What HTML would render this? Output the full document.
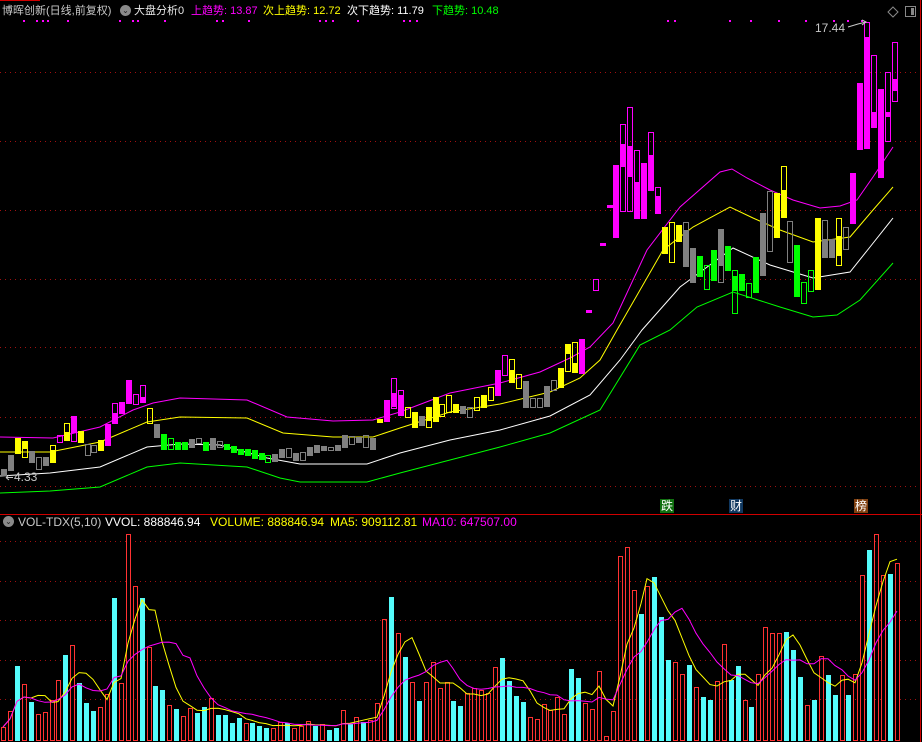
<!DOCTYPE html>
<html><head><meta charset="utf-8">
<style>
html,body{margin:0;padding:0;background:#000;}
body{width:922px;height:742px;overflow:hidden;position:relative;font-family:"Liberation Sans","Noto Sans CJK SC",sans-serif;font-size:12px;}
.t{position:absolute;white-space:nowrap;line-height:14px;}
.hd{font-size:11px;}
svg{position:absolute;left:0;top:0;}
</style></head><body>
<svg id="s" width="922" height="742" viewBox="0 0 922 742"></svg>
<div class="t hd" style="left:2px;top:4px;color:#c8c8c8">博晖创新(日线,前复权)</div>
<div class="t" style="left:120px;top:5px;width:11px;height:11px;border-radius:50%;background:#8a8a8a;color:#222;font-size:8px;text-align:center;line-height:11px">⌄</div>
<div class="t hd" style="left:134px;top:4px;color:#e8e8e8">大盘分析0</div>
<div class="t hd" style="left:191px;top:4px;color:#ff00ff">上趋势: 13.87</div>
<div class="t hd" style="left:263px;top:4px;color:#ffff00">次上趋势: 12.72</div>
<div class="t hd" style="left:347px;top:4px;color:#ffffff">次下趋势: 11.79</div>
<div class="t hd" style="left:432px;top:4px;color:#00ff00">下趋势: 10.48</div>
<div class="t" style="left:815px;top:21px;color:#c8c8c8">17.44</div>
<div class="t" style="left:14px;top:470px;color:#c8c8c8">4.33</div>
<div class="t" style="left:660px;top:499px;width:14px;height:14px;background:#107010;color:#fff;font-size:12px;text-align:center">跌</div>
<div class="t" style="left:729px;top:499px;width:14px;height:14px;background:#103860;color:#fff;font-size:12px;text-align:center">财</div>
<div class="t" style="left:854px;top:499px;width:14px;height:14px;background:#804010;color:#fff;font-size:12px;text-align:center">榜</div>
<div class="t" style="left:3px;top:516px;width:11px;height:11px;border-radius:50%;background:#8a8a8a;color:#222;font-size:8px;text-align:center;line-height:11px">⌄</div>
<div class="t" style="left:18px;top:515px;color:#c8c8c8">VOL-TDX(5,10)</div>
<div class="t" style="left:105px;top:515px;color:#ffffff">VVOL: 888846.94</div>
<div class="t" style="left:210px;top:515px;color:#ffff00">VOLUME: 888846.94</div>
<div class="t" style="left:330px;top:515px;color:#ffff00">MA5: 909112.81</div>
<div class="t" style="left:422px;top:515px;color:#ff00ff">MA10: 647507.00</div>
<script>
var s=document.getElementById('s'),h='';
function L(x1,y1,x2,y2,c,d){h+='<line x1="'+x1+'" y1="'+y1+'" x2="'+x2+'" y2="'+y2+'" stroke="'+c+'" stroke-width="1"'+(d?' stroke-dasharray="1,4"':'')+'/>';}
function R(x,y,w,hh,f,st){h+='<rect x="'+x+'" y="'+y+'" width="'+w+'" height="'+Math.max(hh,1)+'" fill="'+f+'"'+(st?' stroke="'+st+'" stroke-width="1"':'')+'/>';}
function P(pts,c){h+='<polyline points="'+pts+'" fill="none" stroke="'+c+'" stroke-width="1"/>';}
[72,141,210,279,347,417,486].forEach(function(y){L(0,y+.5,920,y+.5,'#a01010',1);});
[541,581,620,660,699].forEach(function(y){L(0,y+.5,920,y+.5,'#a01010',1);});
L(0,514.5,922,514.5,'#d00000');L(920.5,0,920.5,742,'#d00000');L(0,.5,40,.5,'#d00000');
var dots=[23,36,42,47,67,119,132,137,164,216,222,248,319,325,332,357,403,409,416,667,674,729,750,778,805,833,847,861];
dots.forEach(function(x){R(x,20,2,2,'#ff00ff');});
P('0,437 53,438 100,427 133,410 153,403 180,398 247,400 287,417 333,421 373,420 400,412 450,393 500,383 540,372 570,358 590,347 613,323 647,250 680,207 720,172 732,169 747,178 770,190 793,200 820,208 840,206 857,200 873,177 893,147','#ff00ff');
P('0,452 50,452 100,442 147,422 180,417 247,418 283,433 333,437 373,437 400,428 450,412 500,404 550,392 580,378 600,360 617,330 663,250 693,227 730,207 753,218 780,230 813,242 850,237 873,210 893,187','#ffff00');
P('0,476 50,473 100,467 147,447 180,444 220,445 267,458 300,464 367,464 400,453 450,440 500,430 550,416 590,395 620,360 642,330 680,287 733,248 770,265 813,278 850,272 870,247 893,218','#ffffff');
P('0,493 50,491 100,487 147,467 180,463 247,467 280,478 300,482 367,482 400,473 450,460 500,447 550,433 600,410 640,345 670,330 697,307 733,292 780,307 813,317 837,315 860,300 893,263','#00ff00');
var C={M:'#ff00ff',Y:'#ffff00',G:'#808080',N:'#00ff00'};
var cd="G 469 475 F;G 455 470 F;Y 438 453 F;Y 441 457 441 448;G 451 462 F;G 457 469 0;G 457 465 F;Y 445 462 450 462;M 435 442 0;Y 423 440 432 440;M 416 441 416 432;Y 431 442 F;G 444 455 0;G 445 452 0;Y 440 450 F;M 424 445 F;M 403 423 413 423;M 402 413 F;M 380 403 F;M 394 404 0;M 385 402 397 402;Y 408 423 0;G 424 437 F;N 434 449 F;N 438 449 0;N 442 449 F;N 442 449 F;G 439 447 F;G 438 443 0;N 442 450 F;G 438 449 F;G 441 447 0;N 444 449 F;N 446 452 F;N 449 454 F;N 449 455 F;N 450 458 F;N 453 459 F;N 455 462 0;G 454 461 F;G 449 457 F;G 448 457 0;G 453 460 F;G 452 460 0;G 447 455 F;G 445 452 F;G 446 450 F;G 447 450 0;G 445 450 F;G 435 447 F;G 436 444 0;G 437 442 F;G 435 447 0;G 438 449 F;Y 419 422 F;M 400 421 F;M 378 408 393 406;M 390 415 395 415;Y 407 417 0;Y 412 427 F;G 416 425 F;Y 407 427 407 420;Y 397 421 F;Y 404 416 0;Y 395 412 0;Y 404 412 F;G 406 413 F;G 407 417 0;Y 397 410 0;Y 395 407 F;Y 387 400 0;M 370 395 F;M 355 375 0;Y 359 382 370 382;Y 374 388 0;G 381 407 F;G 398 407 0;G 398 407 0;G 386 406 F;G 380 390 0;Y 368 387 F;Y 344 371 344 353;Y 342 372 363 372;M 339 373 F;M 310 312 F;M 279 290 0;M 243 245 F;M 205 207 F;M 165 237 F;M 124 211 144 166;M 107 211 146 176;M 150 218 182 218;M 163 218 F;M 132 190 155 190;M 187 213 196 213;Y 227 253 F;Y 222 262 0;Y 225 241 F;G 222 266 230 266;G 248 282 F;N 256 276 F;N 265 289 0;N 250 280 F;G 229 282 229 265;N 246 270 F;N 270 313 276 290;N 274 290 F;N 283 297 0;N 257 292 F;G 213 275 F;G 191 251 0;Y 193 237 F;Y 166 217 190 217;G 221 262 0;N 245 296 F;N 282 303 0;N 270 291 0;Y 218 289 F;G 220 257 239 257;G 239 257 F;Y 218 265 236 255;G 227 249 0;M 173 223 F;M 83 149 F;M 22 148 37 148;M 55 127 112 127;M 89 177 F;M 72 141 112 116;M 42 101 79 90".split(';');
cd.forEach(function(r,i){var a=r.split(' ');var c=C[a[0]],hi=+a[1],lo=+a[2];var x=Math.round(1+6.96*i);
 if(a[3]=='F'){R(x,hi,6,lo-hi+1,c);}
 else{R(x+.5,hi+.5,5,lo-hi,'none',c);if(a[3]!='0'){R(x,+a[3],6,+a[4]-(+a[3])+1,c);}}});
L(6,477.5,13,477.5,'#c8c8c8');L(6,477.5,9,475,'#c8c8c8');L(6,477.5,9,480,'#c8c8c8');
P('848,27 858,24 866,22','#c8c8c8');P('862,20 866,22 862,25','#c8c8c8');
h+='<path d="M893 7 L898 12 L893 17 L888 12 Z" fill="none" stroke="#888" stroke-width="1"/>';
R(905.5,6.5,10,10,'none','#888');R(911,8,3,7,'#888');
var vd="727 R,711 R,666 C,684 R,702 C,714 R,712 R,700 R,680 R,655 C,645 R,683 C,703 C,711 C,707 R,694 R,598 C,683 R,534 R,586 R,598 C,647 R,686 C,690 C,705 R,709 C,716 R,708 R,713 C,707 C,698 R,715 C,715 C,723 C,718 C,723 R,723 C,726 C,728 C,728 R,722 R,723 C,728 R,726 R,721 R,726 C,724 R,730 C,728 C,710 R,724 C,717 R,722 C,720 R,703 R,619 R,597 C,633 R,657 C,682 R,701 C,682 R,662 R,688 R,682 R,701 C,706 C,693 R,688 R,690 R,693 R,667 R,658 C,681 C,696 C,702 C,717 R,719 R,704 R,710 R,697 R,714 R,669 C,678 C,703 R,709 R,671 R,736 R,711 R,556 R,547 R,590 R,614 C,586 R,577 C,617 C,660 C,662 R,674 R,665 C,687 R,697 C,700 C,681 R,644 R,680 C,666 C,700 R,707 C,674 R,627 R,633 R,633 R,632 C,650 C,677 C,705 R,700 C,656 R,675 C,695 C,675 R,695 C,674 R,575 R,550 C,534 R,575 R,574 C,563 R".split(',');
var vals=[],n=vd.length;
vd.forEach(function(r,i){var a=r.split(' ');var t=+a[0];var x=Math.round(1+6.93*i);vals.push(741-t);
 if(a[1]=='C')R(x,t,5,741-t,'#54fcfc');else R(x+.5,t+.5,4,740-t,'none','#ff3232');});
function ma(k){var p=[];for(var i=0;i<n;i++){var s0=0,c0=0;for(var j=Math.max(0,i-k+1);j<=i;j++){s0+=vals[j];c0++;}p.push(Math.round(3+6.93*i)+','+(741-s0/c0).toFixed(1));}return p.join(' ');}
P(ma(5),'#ffff00');P(ma(10),'#ff00ff');
s.innerHTML=h;
</script>
</body></html>
